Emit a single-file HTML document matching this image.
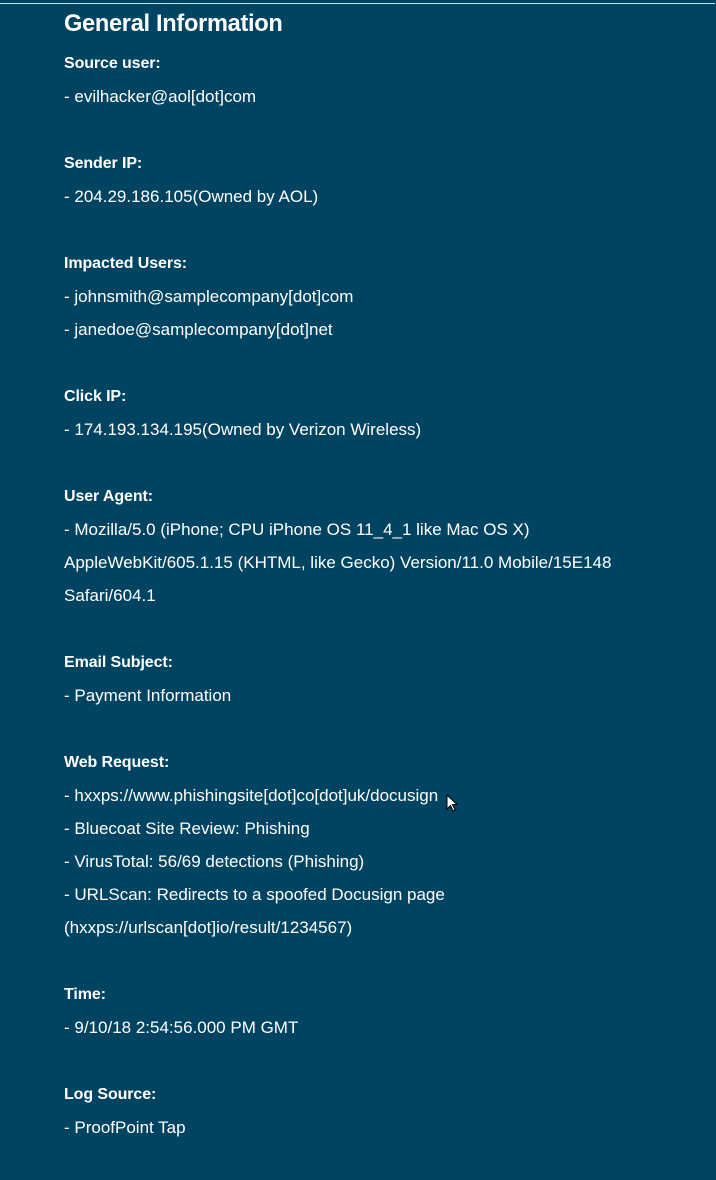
<!DOCTYPE html>
<html><head><style>
html,body{margin:0;padding:0;background:#014461;width:716px;height:1180px;overflow:hidden}
body{position:relative;font-family:"Liberation Sans",Arial,sans-serif;color:#fff}
.hr{position:absolute;left:0;top:3px;width:715px;height:1px;background:#bfe6f2}
.l{position:absolute;left:64px;font-size:17px;line-height:20px;white-space:nowrap}
.b{font-weight:bold;font-size:16px;letter-spacing:-0.1px}
h1{position:absolute;left:64px;top:9px;margin:0;font-size:23.6px;font-weight:bold;line-height:30px;letter-spacing:-0.3px}
</style></head><body>
<div class="hr"></div>
<h1>General Information</h1>
<div class="l b" style="top:54px">Source user:</div>
<div class="l" style="top:87px">- evilhacker@aol[dot]com</div>
<div class="l b" style="top:154px">Sender IP:</div>
<div class="l" style="top:187px">- 204.29.186.105(Owned by AOL)</div>
<div class="l b" style="top:254px">Impacted Users:</div>
<div class="l" style="top:287px">- johnsmith@samplecompany[dot]com</div>
<div class="l" style="top:320px">- janedoe@samplecompany[dot]net</div>
<div class="l b" style="top:387px">Click IP:</div>
<div class="l" style="top:420px">- 174.193.134.195(Owned by Verizon Wireless)</div>
<div class="l b" style="top:487px">User Agent:</div>
<div class="l" style="top:520px">- Mozilla/5.0 (iPhone; CPU iPhone OS 11_4_1 like Mac OS X)</div>
<div class="l" style="top:553px">AppleWebKit/605.1.15 (KHTML, like Gecko) Version/11.0 Mobile/15E148</div>
<div class="l" style="top:586px">Safari/604.1</div>
<div class="l b" style="top:653px">Email Subject:</div>
<div class="l" style="top:686px">- Payment Information</div>
<div class="l b" style="top:753px">Web Request:</div>
<div class="l" style="top:786px">- hxxps://www.phishingsite[dot]co[dot]uk/docusign</div>
<div class="l" style="top:819px">- Bluecoat Site Review: Phishing</div>
<div class="l" style="top:852px">- VirusTotal: 56/69 detections (Phishing)</div>
<div class="l" style="top:885px">- URLScan: Redirects to a spoofed Docusign page</div>
<div class="l" style="top:918px">(hxxps://urlscan[dot]io/result/1234567)</div>
<div class="l b" style="top:985px">Time:</div>
<div class="l" style="top:1018px">- 9/10/18 2:54:56.000 PM GMT</div>
<div class="l b" style="top:1085px">Log Source:</div>
<div class="l" style="top:1118px">- ProofPoint Tap</div>
<svg style="position:absolute;left:446px;top:794px" width="12" height="20" viewBox="0 0 12 20"><path d="M1 1 L1 15 L4.5 11.5 L7 17 L9 16 L6.5 10.5 L11 10.5 Z" fill="#fff" stroke="#000" stroke-width="1"/></svg>
</body></html>
